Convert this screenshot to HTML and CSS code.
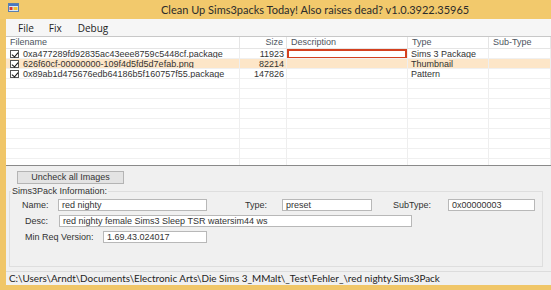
FILE: index.html
```html
<!DOCTYPE html>
<html lang="en">
<head>
  <meta charset="UTF-8">
  <title>Clean Up Sims3packs</title>
  <link rel="stylesheet" href="styles.css">
</head>
<body>
  <div class="window">
    <div class="titlebar">
      <svg class="app-icon" width="11" height="9" viewBox="0 0 11 9">
        <rect x="0.5" y="0.5" width="10" height="8" fill="#dfe9f5" stroke="#5a7fb0"/>
        <rect x="1" y="1" width="9" height="2" fill="#4a78c0"/>
        <rect x="1.5" y="4" width="3" height="3" fill="#d8382c"/>
        <rect x="5.5" y="4" width="4" height="3" fill="#f2c230"/>
      </svg>
      <span class="title">Clean Up Sims3packs Today! Also raises dead? v1.0.3922.35965</span>
    </div>

    <div class="client">
      <div class="menubar">
        <span class="menu-item">File</span>
        <span class="menu-item">Fix</span>
        <span class="menu-item">Debug</span>
      </div>

      <div class="listview">
        <div class="lv-row lv-header">
          <div class="cell">Filename</div>
          <div class="cell right">Size</div>
          <div class="cell">Description</div>
          <div class="cell">Type</div>
          <div class="cell">Sub-Type</div>
        </div>
        <div class="lv-row">
          <div class="cell"><span class="check"></span>0xa477289fd92835ac43eee8759c5448cf.package</div>
          <div class="cell right">11923</div>
          <div class="cell"><span class="edit-box"></span></div>
          <div class="cell">Sims 3 Package</div>
          <div class="cell"></div>
        </div>
        <div class="lv-row selected">
          <div class="cell"><span class="check"></span>626f60cf-00000000-109f4d5fd5d7efab.png</div>
          <div class="cell right">82214</div>
          <div class="cell"></div>
          <div class="cell">Thumbnail</div>
          <div class="cell"></div>
        </div>
        <div class="lv-row">
          <div class="cell"><span class="check"></span>0x89ab1d475676edb64186b5f160757f55.package</div>
          <div class="cell right">147826</div>
          <div class="cell"></div>
          <div class="cell">Pattern</div>
          <div class="cell"></div>
        </div>
        <div class="lv-row empty"><div class="cell"></div><div class="cell"></div><div class="cell"></div><div class="cell"></div><div class="cell"></div></div>
        <div class="lv-row empty"><div class="cell"></div><div class="cell"></div><div class="cell"></div><div class="cell"></div><div class="cell"></div></div>
        <div class="lv-row empty"><div class="cell"></div><div class="cell"></div><div class="cell"></div><div class="cell"></div><div class="cell"></div></div>
        <div class="lv-row empty"><div class="cell"></div><div class="cell"></div><div class="cell"></div><div class="cell"></div><div class="cell"></div></div>
        <div class="lv-row empty"><div class="cell"></div><div class="cell"></div><div class="cell"></div><div class="cell"></div><div class="cell"></div></div>
        <div class="lv-row empty"><div class="cell"></div><div class="cell"></div><div class="cell"></div><div class="cell"></div><div class="cell"></div></div>
        <div class="lv-row empty"><div class="cell"></div><div class="cell"></div><div class="cell"></div><div class="cell"></div><div class="cell"></div></div>
        <div class="lv-row empty"><div class="cell"></div><div class="cell"></div><div class="cell"></div><div class="cell"></div><div class="cell"></div></div>
        <div class="lv-row empty"><div class="cell"></div><div class="cell"></div><div class="cell"></div><div class="cell"></div><div class="cell"></div></div>
      </div>

      <div class="panel">
        <button class="btn">Uncheck all Images</button>
        <fieldset class="group">
          <legend>Sims3Pack Information:</legend>
          <div class="form-row">
            <label class="lbl lbl-name">Name:</label>
            <span class="textbox tb-name">red nighty</span>
            <label class="lbl lbl-type">Type:</label>
            <span class="textbox tb-type">preset</span>
            <label class="lbl lbl-sub">SubType:</label>
            <span class="textbox tb-sub">0x00000003</span>
          </div>
          <div class="form-row">
            <label class="lbl lbl-desc">Desc:</label>
            <span class="textbox tb-desc">red nighty female Sims3 Sleep TSR watersim44 ws</span>
          </div>
          <div class="form-row">
            <label class="lbl lbl-ver">Min Req Version:</label>
            <span class="textbox tb-ver">1.69.43.024017</span>
          </div>
        </fieldset>
      </div>

      <div class="statusbar">C:\Users\Arndt\Documents\Electronic Arts\Die Sims 3_MMalt\_Test\Fehler_\red nighty.Sims3Pack</div>
    </div>
  </div>
</body>
</html>
```

FILE: styles.css
```css
* {
  box-sizing: border-box;
}
body {
  margin: 0;
  width: 551px;
  height: 290px;
  overflow: hidden;
  background: #f0c668;
  font-family: 'Liberation Sans', Arial, sans-serif;
  font-size: 9px;
  color: #333;
}
.window {
  display: flex;
  flex-direction: column;
  height: 290px;
}
.titlebar {
  height: 19px;
  display: flex;
  align-items: center;
  padding-left: 8px;
  background: #f2c96c;
  flex-shrink: 0;
}
.app-icon {
  display: block;
  margin-top: -4px;
}
.title {
  margin-left: 142px;
  font-family: Lato, 'Open Sans', sans-serif;
  font-size: 11px;
  color: #2b2b2b;
  white-space: nowrap;
}
.client {
  margin-left: 6px;
  height: 266px;
  display: flex;
  flex-direction: column;
  background: #f0f0f0;
}
.menubar {
  height: 17px;
  display: flex;
  align-items: center;
  background: #f6f6f6;
  font-family: 'Open Sans', sans-serif;
  font-size: 10px;
  color: #222;
  padding-left: 12px;
  gap: 15px;
}
.menu-item:nth-child(3) {
  margin-left: 1px;
}
.listview {
  height: 130px;
  background: #fff;
  border-top: 1px solid #c8c8c8;
  border-bottom: 1px solid #8a8a8a;
  overflow: hidden;
}
.lv-row {
  display: grid;
  grid-template-columns: 234px 47px 121px 81px 1fr;
  height: 10px;
  line-height: 10px;
  white-space: nowrap;
}
.lv-header {
  height: 12px;
  line-height: 11px;
  color: #4d5460;
  border-bottom: 1px solid #e5e5e5;
}
.lv-header .cell {
  padding-left: 4px;
}
.lv-header .cell.right {
  padding-right: 3px;
}
.cell {
  border-right: 1px solid #eeeeee;
  border-bottom: 1px solid #f0f0f0;
  overflow: hidden;
  padding-left: 3px;
  display: flex;
  align-items: center;
}
.lv-header .cell {
  border-bottom: none;
  border-right: 1px solid #e5e5e5;
}
.cell.right {
  justify-content: flex-end;
  padding-right: 2px;
}
.lv-row.selected {
  background: #fde6c8;
}
.check {
  width: 9px;
  height: 8px;
  margin-left: 1px;
  margin-right: 4px;
  border: 1px solid #555;
  background: #fff;
  position: relative;
  flex-shrink: 0;
}
.check::after {
  content: "";
  position: absolute;
  left: 2px;
  top: 0;
  width: 3px;
  height: 5px;
  border-right: 1.5px solid #111;
  border-bottom: 1.5px solid #111;
  transform: rotate(40deg);
}
.edit-box {
  width: 120px;
  height: 10px;
  margin-left: -3px;
  border: 2px solid #d4401f;
  background: #fff;
}
.panel {
  flex: 1;
  padding-top: 5px;
}
.btn {
  display: block;
  margin-left: 11px;
  width: 107px;
  height: 13px;
  padding: 0;
  border: 1px solid #b4b4b4;
  background: #e3e3e3;
  font-family: 'Liberation Sans', Arial, sans-serif;
  font-size: 9px;
  color: #333;
  line-height: 11px;
}
.group {
  margin: 3px 8px 0 3px;
  padding: 0 0 24px 0;
  height: 80px;
  border: 1px solid #dedede;
  min-width: 0;
}
.group legend {
  padding: 0 1px;
  margin-left: 1px;
  line-height: 9px;
}
.form-row {
  display: flex;
  align-items: center;
  height: 16px;
}
.form-row:first-of-type {
  margin-top: 1px;
}
.lbl {
  flex-shrink: 0;
}
.lbl-name {
  margin-left: 12px;
  width: 36px;
}
.lbl-type {
  margin-left: 38px;
  width: 37px;
}
.lbl-sub {
  margin-left: 21px;
  width: 55px;
}
.lbl-desc {
  margin-left: 15px;
  width: 34px;
}
.lbl-ver {
  margin-left: 15px;
  width: 78px;
}
.textbox {
  height: 12px;
  line-height: 10px;
  border: 1px solid #b8b8b8;
  background: #fff;
  padding-left: 3px;
  white-space: nowrap;
  overflow: hidden;
}
.tb-name { width: 149px; }
.tb-type { width: 90px; }
.tb-sub { width: 87px; }
.tb-desc { width: 353px; }
.tb-ver { width: 104px; }
.statusbar {
  height: 14px;
  border-top: 1px solid #dcdcdc;
  background: #f0f0f0;
  padding-left: 3px;
  font-family: Lato, 'Open Sans', sans-serif;
  font-size: 9.9px;
  line-height: 12px;
  color: #222;
  white-space: nowrap;
}
```
